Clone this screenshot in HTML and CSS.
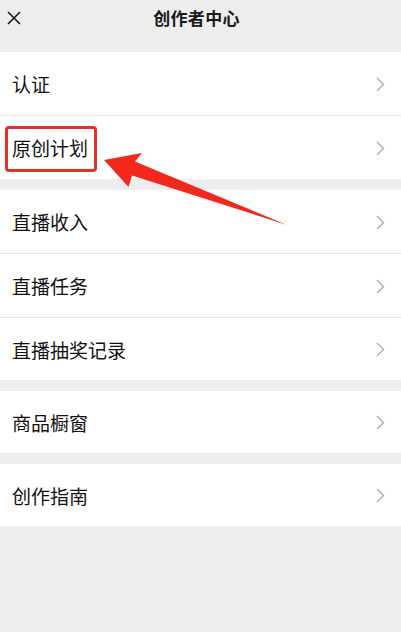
FILE: index.html
```html
<!DOCTYPE html>
<html lang="zh-CN">
<head>
<meta charset="utf-8">
<title>创作者中心</title>
<link rel="stylesheet" href="styles.css">
</head>
<body>
<div class="page">
  <header class="topbar">
    <svg class="close" width="14" height="14" viewBox="0 0 14 14"><path d="M1 1L13 13M13 1L1 13" stroke="#1a1a1a" stroke-width="1.6" fill="none"/></svg>
    <div class="title">创作者中心</div>
  </header>

  <section class="group">
    <div class="row"><span>认证</span><svg class="chev" width="9" height="15" viewBox="0 0 9 15"><path d="M1 1L7.5 7.5L1 14" stroke="#b3b3b3" stroke-width="1.5" fill="none"/></svg></div>
    <div class="row"><span>原创计划</span><svg class="chev" width="9" height="15" viewBox="0 0 9 15"><path d="M1 1L7.5 7.5L1 14" stroke="#b3b3b3" stroke-width="1.5" fill="none"/></svg></div>
  </section>

  <section class="group">
    <div class="row"><span>直播收入</span><svg class="chev" width="9" height="15" viewBox="0 0 9 15"><path d="M1 1L7.5 7.5L1 14" stroke="#b3b3b3" stroke-width="1.5" fill="none"/></svg></div>
    <div class="row"><span>直播任务</span><svg class="chev" width="9" height="15" viewBox="0 0 9 15"><path d="M1 1L7.5 7.5L1 14" stroke="#b3b3b3" stroke-width="1.5" fill="none"/></svg></div>
    <div class="row short"><span>直播抽奖记录</span><svg class="chev" width="9" height="15" viewBox="0 0 9 15"><path d="M1 1L7.5 7.5L1 14" stroke="#b3b3b3" stroke-width="1.5" fill="none"/></svg></div>
  </section>

  <section class="group">
    <div class="row short"><span>商品橱窗</span><svg class="chev" width="9" height="15" viewBox="0 0 9 15"><path d="M1 1L7.5 7.5L1 14" stroke="#b3b3b3" stroke-width="1.5" fill="none"/></svg></div>
  </section>

  <section class="group">
    <div class="row short"><span>创作指南</span><svg class="chev" width="9" height="15" viewBox="0 0 9 15"><path d="M1 1L7.5 7.5L1 14" stroke="#b3b3b3" stroke-width="1.5" fill="none"/></svg></div>
  </section>

  <div class="highlight"></div>
  <svg class="arrow" width="401" height="632" viewBox="0 0 401 632">
    <polygon points="104,160 142,153 135,161.5 287,225 132,175.5 128.5,187" fill="#f0281e"/>
  </svg>
</div>
</body>
</html>
```

FILE: styles.css
```css
html, body {
  margin: 0;
  padding: 0;
  background: #ededed;
}
body {
  font-family: "Noto Sans CJK SC", "Noto Sans", sans-serif;
  color: #111;
}
.page {
  position: relative;
  width: 401px;
  height: 632px;
  overflow: hidden;
  background: #ededed;
}
.topbar {
  position: relative;
  height: 41px;
  display: flex;
  align-items: center;
  justify-content: center;
  margin-bottom: 11px;
}
.close {
  position: absolute;
  left: 7px;
  top: 11px;
}
.title {
  font-size: 17px;
  font-weight: 700;
  color: #1a1a1a;
  margin-top: -6px;
  margin-left: -8px;
  letter-spacing: 0.3px;
}
.group {
  background: #fff;
  margin-bottom: 11px;
}
.row {
  height: 63px;
  display: flex;
  align-items: center;
  justify-content: space-between;
  padding: 0 16px 0 12px;
  font-size: 19px;
  color: #111;
}
.row.short {
  height: 62px;
}
.row + .row {
  border-top: 1px solid #e6e6e6;
}
.chev {
  margin-top: 1px;
}
.highlight {
  position: absolute;
  left: 5px;
  top: 126px;
  width: 86px;
  height: 40px;
  border: 3px solid #e5302a;
  border-radius: 4px;
}
.arrow {
  position: absolute;
  left: 0;
  top: 0;
}
```
